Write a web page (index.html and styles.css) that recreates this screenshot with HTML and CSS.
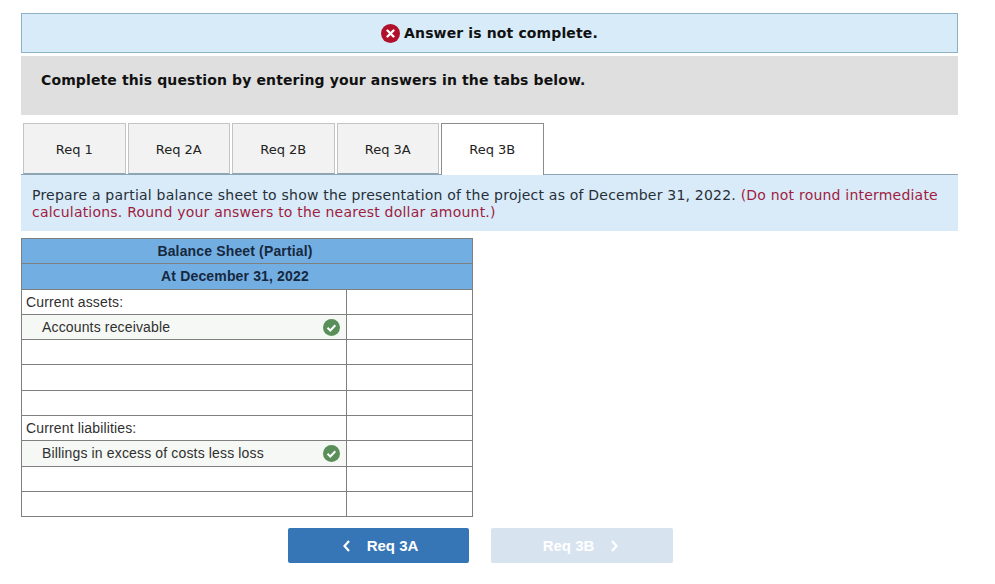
FILE: index.html
```html
<!DOCTYPE html>
<html lang="en">
<head>
<meta charset="utf-8">
<title>Req 3B</title>
<link rel="stylesheet" href="styles.css">
</head>
<body>
<main class="page">
  <div class="banner">
    <svg class="banner-icon" width="19" height="19" viewBox="0 0 19 19"><circle cx="9.5" cy="9.5" r="9.5" fill="#b0102a"/><path d="M6.500 6.500l6 6M12.500 6.500l-6 6" stroke="#fff" stroke-width="2.400" stroke-linecap="round"/></svg>
    <strong>Answer is not complete.</strong>
  </div>
  <div class="prompt">Complete this question by entering your answers in the tabs below.</div>
  <div class="tabs">
    <div class="tab">Req 1</div>
    <div class="tab">Req 2A</div>
    <div class="tab">Req 2B</div>
    <div class="tab">Req 3A</div>
    <div class="tab tab-active">Req 3B</div>
  </div>
  <div class="info">Prepare a partial balance sheet to show the presentation of the project as of December 31, 2022. <span class="note">(Do not round intermediate calculations. Round your answers to the nearest dollar amount.)</span></div>
  <table class="sheet">
    <colgroup><col class="col-label"><col class="col-value"></colgroup>
    <tr class="row"><th colspan="2">Balance Sheet (Partial)</th></tr>
    <tr class="row row-tall"><th colspan="2">At December 31, 2022</th></tr>
    <tr class="row"><td>Current assets:</td><td></td></tr>
    <tr class="row"><td class="ok"><div class="ok-inner"><span>Accounts receivable</span><svg width="17" height="17" viewBox="0 0 17 17"><circle cx="8.5" cy="8.5" r="8.5" fill="#5a8f5a"/><path d="M4.500 8.800l2.800 2.700 5-5.200" fill="none" stroke="#fff" stroke-width="2"/></svg></div></td><td></td></tr>
    <tr class="row"><td></td><td></td></tr>
    <tr class="row row-tall"><td></td><td></td></tr>
    <tr class="row"><td></td><td></td></tr>
    <tr class="row"><td>Current liabilities:</td><td></td></tr>
    <tr class="row row-tall"><td class="ok"><div class="ok-inner"><span>Billings in excess of costs less loss</span><svg width="17" height="17" viewBox="0 0 17 17"><circle cx="8.5" cy="8.5" r="8.5" fill="#5a8f5a"/><path d="M4.500 8.800l2.800 2.700 5-5.200" fill="none" stroke="#fff" stroke-width="2"/></svg></div></td><td></td></tr>
    <tr class="row"><td></td><td></td></tr>
    <tr class="row"><td></td><td></td></tr>
  </table>
  <div class="nav">
    <div class="btn btn-prev"><svg width="9" height="14" viewBox="0 0 9 14"><path d="M7 2L2.500 7 7 12" fill="none" stroke="#fff" stroke-width="2.200"/></svg><span>Req 3A</span></div>
    <div class="btn btn-next"><span>Req 3B</span><svg width="9" height="14" viewBox="0 0 9 14"><path d="M2 2l4.500 5L2 12" fill="none" stroke="#fff" stroke-width="2.200"/></svg></div>
  </div>
</main>
</body>
</html>
```
FILE: styles.css
```css
html, body { margin: 0; padding: 0; background: #fff; }
body { overflow: hidden; }
.page {
  box-sizing: border-box;
  width: 958px;
  height: 584px;
  margin-left: 21px;
  padding-top: 13px;
  font-family: "DejaVu Sans", Verdana, sans-serif;
  color: #1a1a1a;
}
.banner {
  box-sizing: border-box;
  height: 40px;
  width: 937px;
  background: #d8ebf8;
  border: 1px solid #8fb1c6;
  display: flex;
  align-items: center;
  justify-content: center;
  gap: 4px;
  font-size: 14px;
  letter-spacing: 0.13px;
  color: #111;
}
.prompt {
  box-sizing: border-box;
  width: 937px;
  height: 59px;
  margin-top: 3px;
  padding: 15px 20px 0;
  background: #dfdfdf;
  font-size: 14px;
  font-weight: bold;
  letter-spacing: 0.12px;
  line-height: 18px;
  color: #111;
}
.tabs {
  display: flex;
  gap: 2px;
  width: 937px;
  box-sizing: border-box;
  margin-top: 8px;
  padding-left: 2px;
  border-bottom: 1px solid #8ea5b5;
}
.tab {
  box-sizing: border-box;
  width: 102.5px;
  height: 51px;
  margin-bottom: -1px;
  padding-top: 2px;
  background: #f2f2f2;
  border: 1px solid #c4c4c4;
  border-bottom: 1px solid #8ea5b5;
  display: flex;
  align-items: center;
  justify-content: center;
  font-size: 13px;
  color: #222;
}
.tab-active {
  height: 52px;
  padding-top: 0;
  padding-bottom: 1px;
  background: #fff;
  border-color: #8c8c8c;
  border-bottom: 0;
  position: relative;
}
.info {
  box-sizing: border-box;
  width: 937px;
  height: 56px;
  padding: 12px 11px 0;
  background: #d9ebf8;
  font-size: 14px;
  letter-spacing: 0.21px;
  line-height: 17px;
  color: #262f38;
}
.note { color: #a01c40; }
.sheet {
  margin-top: 7px;
  width: 451px;
  table-layout: fixed;
  border-collapse: collapse;
  font-family: "Liberation Sans", Arial, sans-serif;
  font-size: 14px;
  letter-spacing: 0.15px;
}
.col-label { width: 325px; }
.col-value { width: 126px; }
.row { height: 25px; }
.row-tall { height: 26px; }
.sheet th, .sheet td {
  border: 1px solid #7f7f7f;
  padding: 0 0 0 4px;
  line-height: 16px;
  color: #303030;
}
.sheet th {
  padding: 0 24px 0 0;
  background: #73aee3;
  color: #16293f;
  font-weight: bold;
  text-align: center;
}
.sheet .row-tall th { padding-bottom: 1px; }
.sheet td.ok { background: #f5f8f4; padding: 0 6px 0 20px; }
.sheet .row-tall td.ok { padding-bottom: 1px; }
.ok-inner {
  display: flex;
  align-items: center;
  justify-content: space-between;
}
.nav {
  display: flex;
  gap: 22px;
  margin: 11px 0 0 267px;
}
.btn {
  box-sizing: border-box;
  height: 35px;
  border-radius: 2px;
  display: flex;
  align-items: center;
  justify-content: center;
  gap: 16px;
  font-family: "Liberation Sans", Arial, sans-serif;
  font-size: 15px;
  font-weight: bold;
  color: #fff;
}
.btn-prev { width: 181px; padding-left: 3px; background: #3676b6; }
.btn-next { width: 182px; padding-right: 2px; background: #d7e3ef; }
```
